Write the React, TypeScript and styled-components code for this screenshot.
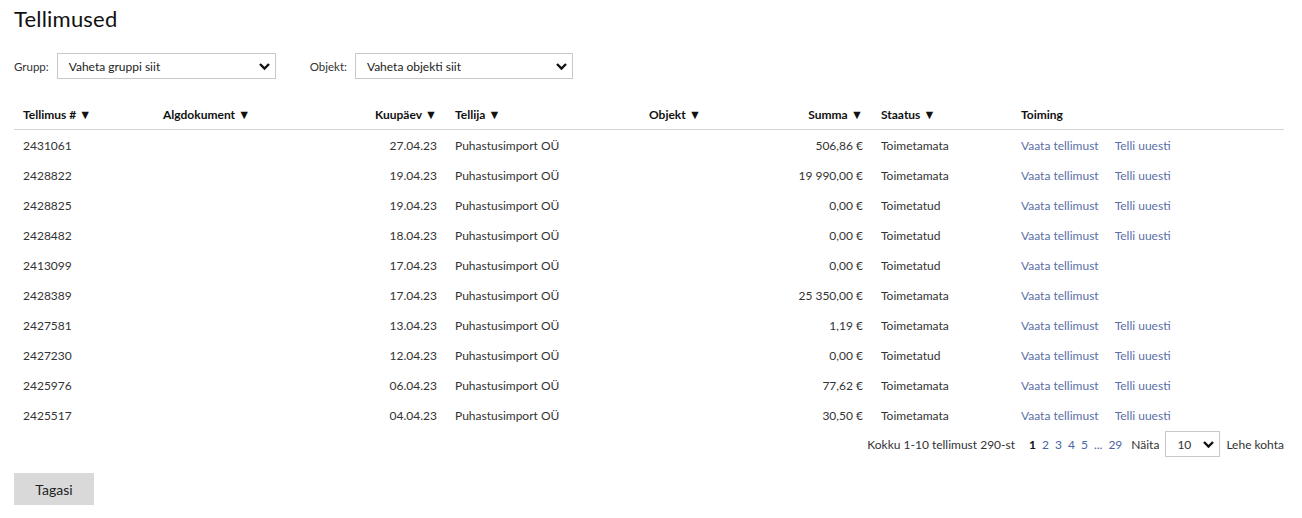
import React from "react";
import styled, { createGlobalStyle } from "styled-components";

const GlobalStyle = createGlobalStyle`
	body {
		margin: 0;
		font-family: Lato, "Open Sans", sans-serif;
		color: #222;
		background: #fff;
	}
`;

type Order = {
	id: string;
	date: string;
	customer: string;
	sum: string;
	status: string;
	reorder: boolean;
};

const ORDERS: Order[] = [
	{ id: "2431061", date: "27.04.23", customer: "Puhastusimport OÜ", sum: "506,86 €", status: "Toimetamata", reorder: true },
	{ id: "2428822", date: "19.04.23", customer: "Puhastusimport OÜ", sum: "19 990,00 €", status: "Toimetamata", reorder: true },
	{ id: "2428825", date: "19.04.23", customer: "Puhastusimport OÜ", sum: "0,00 €", status: "Toimetatud", reorder: true },
	{ id: "2428482", date: "18.04.23", customer: "Puhastusimport OÜ", sum: "0,00 €", status: "Toimetatud", reorder: true },
	{ id: "2413099", date: "17.04.23", customer: "Puhastusimport OÜ", sum: "0,00 €", status: "Toimetatud", reorder: false },
	{ id: "2428389", date: "17.04.23", customer: "Puhastusimport OÜ", sum: "25 350,00 €", status: "Toimetamata", reorder: false },
	{ id: "2427581", date: "13.04.23", customer: "Puhastusimport OÜ", sum: "1,19 €", status: "Toimetamata", reorder: true },
	{ id: "2427230", date: "12.04.23", customer: "Puhastusimport OÜ", sum: "0,00 €", status: "Toimetatud", reorder: true },
	{ id: "2425976", date: "06.04.23", customer: "Puhastusimport OÜ", sum: "77,62 €", status: "Toimetamata", reorder: true },
	{ id: "2425517", date: "04.04.23", customer: "Puhastusimport OÜ", sum: "30,50 €", status: "Toimetamata", reorder: true },
];

const Chevron = () => (
	<svg width="13" height="9" viewBox="0 0 13 9">
		<path d="M2 2l4.5 4.5L11 2" fill="none" stroke="#111" strokeWidth="2.4" />
	</svg>
);

const App = () => {
	return (
		<Page>
			<GlobalStyle />
			<Title>Tellimused</Title>
			<Filters>
				<FilterLabel>Grupp:</FilterLabel>
				<SelectBox $width={219}>
					<span>Vaheta gruppi siit</span>
					<Chevron />
				</SelectBox>
				<FilterLabel $gap>Objekt:</FilterLabel>
				<SelectBox $width={218}>
					<span>Vaheta objekti siit</span>
					<Chevron />
				</SelectBox>
			</Filters>
			<Table>
				<colgroup>
					<col style={{ width: 140 }} />
					<col style={{ width: 140 }} />
					<col style={{ width: 152 }} />
					<col style={{ width: 194 }} />
					<col style={{ width: 120 }} />
					<col style={{ width: 112 }} />
					<col style={{ width: 140 }} />
					<col />
				</colgroup>
				<thead>
					<tr>
						<Th>Tellimus # <Arrow>▼</Arrow></Th>
						<Th>Algdokument <Arrow>▼</Arrow></Th>
						<Th $right>Kuupäev <Arrow>▼</Arrow></Th>
						<Th>Tellija <Arrow>▼</Arrow></Th>
						<Th>Objekt <Arrow>▼</Arrow></Th>
						<Th $right>Summa <Arrow>▼</Arrow></Th>
						<Th>Staatus <Arrow>▼</Arrow></Th>
						<Th>Toiming</Th>
					</tr>
				</thead>
				<tbody>
					{ORDERS.map((o) => (
						<tr key={o.id}>
							<Td>{o.id}</Td>
							<Td></Td>
							<Td $right>{o.date}</Td>
							<Td>{o.customer}</Td>
							<Td></Td>
							<Td $right>{o.sum}</Td>
							<Td>{o.status}</Td>
							<Td>
								<Link>Vaata tellimust</Link>
								{o.reorder && <Link>Telli uuesti</Link>}
							</Td>
						</tr>
					))}
				</tbody>
			</Table>
			<Pager>
				<span>Kokku 1-10 tellimust 290-st</span>
				<Pages>
					<PageNum $active>1</PageNum>
					<PageNum>2</PageNum>
					<PageNum>3</PageNum>
					<PageNum>4</PageNum>
					<PageNum>5</PageNum>
					<PageNum>...</PageNum>
					<PageNum>29</PageNum>
				</Pages>
				<span>Näita</span>
				<SmallSelect>
					<span>10</span>
					<Chevron />
				</SmallSelect>
				<span>Lehe kohta</span>
			</Pager>
			<BackButton>Tagasi</BackButton>
		</Page>
	);
};

export default App;

const Page = styled.div`
	padding: 6px 18px 12px 14px;
	font-size: 12px;
`;

const Title = styled.h1`
	margin: 0;
	font-size: 22px;
	font-weight: 400;
	line-height: 26px;
	color: #111;
	letter-spacing: 0.2px;
`;

const Filters = styled.div`
	display: flex;
	align-items: center;
	margin-top: 21px;
`;

const FilterLabel = styled.span<{ $gap?: boolean }>`
	color: #333;
	font-size: 11.5px;
	margin-left: ${(p) => (p.$gap ? "34px" : "0")};
	margin-right: 8px;
`;

const SelectBox = styled.div<{ $width: number }>`
	display: flex;
	align-items: center;
	justify-content: space-between;
	box-sizing: border-box;
	width: ${(p) => p.$width}px;
	height: 26px;
	padding: 0 4px 0 11px;
	border: 1px solid #c8c8c8;
	font-size: 12px;
	color: #222;
`;

const Table = styled.table`
	margin-top: 20px;
	width: 1270px;
	border-collapse: collapse;
	table-layout: fixed;
`;

const Th = styled.th<{ $right?: boolean }>`
	text-align: ${(p) => (p.$right ? "right" : "left")};
	font-weight: 700;
	font-size: 12px;
	line-height: 15px;
	color: #111;
	padding: 8px 9px 7px 9px;
	border-bottom: 1px solid #d4d4d4;
	white-space: nowrap;
`;

const Arrow = styled.span`
	font-size: 12.5px;
`;

const Td = styled.td<{ $right?: boolean }>`
	text-align: ${(p) => (p.$right ? "right" : "left")};
	padding: 0 9px;
	height: 30px;
	color: #333;
	white-space: nowrap;
`;

const Link = styled.a`
	color: #5b6fa8;
	cursor: pointer;
	margin-right: 16px;
`;

const Pager = styled.div`
	display: flex;
	align-items: center;
	justify-content: flex-end;
	width: 1270px;
	gap: 9px;
	color: #333;
	margin-top: 1px;
`;

const Pages = styled.div`
	display: flex;
	gap: 6px;
	margin-left: 5px;
`;

const PageNum = styled.span<{ $active?: boolean }>`
	color: ${(p) => (p.$active ? "#111" : "#4a64a4")};
	font-weight: ${(p) => (p.$active ? 700 : 400)};
`;

const SmallSelect = styled.div`
	display: flex;
	align-items: center;
	justify-content: space-between;
	box-sizing: border-box;
	width: 55px;
	height: 26px;
	padding: 0 4px 0 11px;
	border: 1px solid #c8c8c8;
	margin-left: -3px;
	margin-right: -3px;
`;

const BackButton = styled.button`
	display: block;
	margin-top: 16px;
	width: 80px;
	height: 32px;
	border: none;
	background: #d9d9d9;
	font-family: inherit;
	font-size: 14px;
	color: #222;
`;
